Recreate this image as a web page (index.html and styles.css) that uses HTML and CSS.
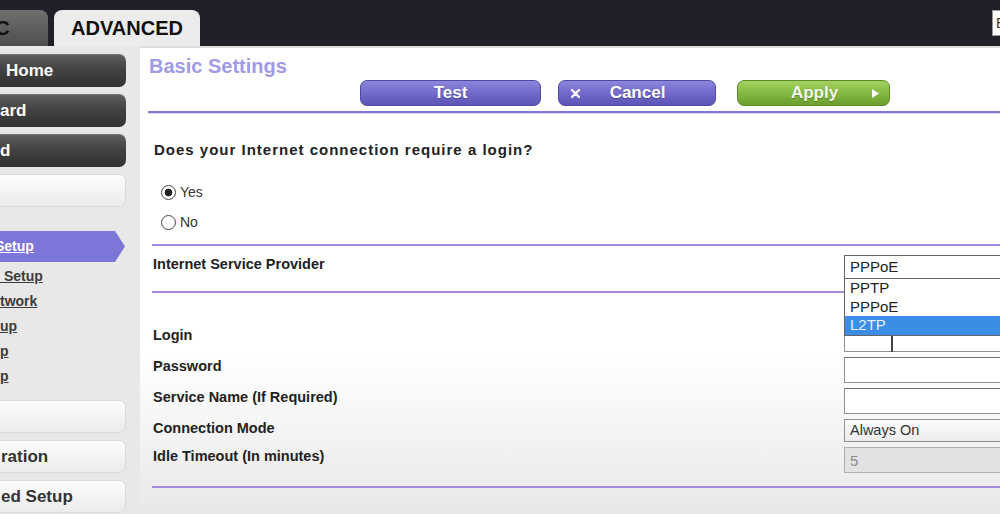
FILE: index.html
```html
<!DOCTYPE html>
<html lang="en">
<head>
    <meta charset="UTF-8">
    <meta name="viewport" content="width=device-width, initial-scale=1.0">
    <title>Basic Settings</title>
    <link rel="stylesheet" href="styles.css">
</head>
<body>
    <header class="topbar">
        <nav class="tabs">
            <a class="tab tab-basic">BASIC</a>
            <a class="tab tab-advanced">ADVANCED</a>
        </nav>
        <div class="lang">English</div>
    </header>

    <div class="page">
        <aside class="sidebar">
            <a class="menu-btn dark first">Home</a>
            <a class="menu-btn dark">ard</a>
            <a class="menu-btn dark">d</a>
            <a class="menu-btn light"></a>

            <a class="sub-active">Setup</a>
            <ul class="sub-menu">
                <li><a>&nbsp;Setup</a></li>
                <li><a>twork</a></li>
                <li><a>up</a></li>
                <li><a>p</a></li>
                <li><a>p</a></li>
            </ul>

            <a class="menu-btn light after-sub"></a>
            <a class="menu-btn light">ration</a>
            <a class="menu-btn light">ed Setup</a>
        </aside>

        <main class="content">
            <h2 class="title">Basic Settings</h2>

            <div class="actions">
                <button class="btn purple btn-test"><span class="btn-label">Test</span></button>
                <button class="btn purple btn-cancel">
                    <svg class="icon-x" width="9" height="9" viewBox="0 0 9 9"><path d="M1 1 L8 8 M8 1 L1 8" stroke="#fff" stroke-width="2.4" stroke-linecap="round"/></svg>
                    <span class="btn-label">Cancel</span>
                </button>
                <button class="btn green btn-apply">
                    <span class="btn-label">Apply</span>
                    <svg class="icon-play" width="7" height="9" viewBox="0 0 7 9"><polygon points="0,0 7,4.5 0,9" fill="#fff"/></svg>
                </button>
            </div>
            <div class="rule rule-top"></div>

            <form class="settings">
                <p class="question">Does your Internet connection require a login?</p>
                <label class="radio"><input type="radio" name="login" checked>Yes</label>
                <label class="radio"><input type="radio" name="login">No</label>
                <div class="rule"></div>

                <div class="row isp">
                    <span class="label">Internet Service Provider</span>
                    <div class="combo">
                        <div class="select">PPPoE</div>
                        <ul class="dropdown">
                            <li>PPTP</li>
                            <li>PPPoE</li>
                            <li class="selected">L2TP</li>
                        </ul>
                    </div>
                </div>
                <div class="rule"></div>

                <div class="fields">
                    <div class="row h31">
                        <span class="label">Login</span>
                        <div class="field">
                            <input type="text">
                            <span class="caret"></span>
                        </div>
                    </div>
                    <div class="row h31">
                        <span class="label">Password</span>
                        <div class="field"><input type="password"></div>
                    </div>
                    <div class="row h31">
                        <span class="label">Service Name (If Required)</span>
                        <div class="field"><input type="text"></div>
                    </div>
                    <div class="row h28">
                        <span class="label">Connection Mode</span>
                        <div class="field"><div class="select mode">Always On</div></div>
                    </div>
                    <div class="row h28">
                        <span class="label">Idle Timeout (In minutes)</span>
                        <div class="field"><input type="text" value="5" disabled></div>
                    </div>
                </div>
                <div class="rule rule-bottom"></div>
            </form>
        </main>
    </div>
</body>
</html>
```

FILE: styles.css
```css
body {
    margin: 0;
    height: 514px;
    overflow: hidden;
    font-family: "Liberation Sans", Arial, sans-serif;
    background-color: #e8e8e8;
    color: #222;
}
a {
    text-decoration: none;
}

/* top bar with tabs */
.topbar {
    height: 46px;
    background-color: #1f2028;
    display: flex;
    align-items: flex-end;
}
.tabs {
    display: flex;
    gap: 6px;
}
.tab {
    height: 36px;
    display: flex;
    align-items: center;
    justify-content: center;
    font-size: 20px;
    font-weight: bold;
    color: #111;
    border-radius: 8px 8px 0 0;
}
.tab-basic {
    width: 139px;
    margin-left: -91px;
    background: linear-gradient(#6f6f6f, #4e4e4e);
}
.tab-advanced {
    width: 146px;
    background-color: #ececec;
}
.lang {
    margin-left: auto;
    margin-right: -32px;
    align-self: center;
    width: 40px;
    height: 26px;
    box-sizing: border-box;
    padding-left: 3px;
    background: #fff;
    border: 1px solid #999;
    font-size: 14px;
    line-height: 24px;
    color: #333;
    overflow: hidden;
}

.page {
    display: flex;
    height: 468px;
}

/* left menu */
.sidebar {
    width: 140px;
    flex: none;
    padding-top: 8px;
    background-color: #e8e8e8;
    overflow: hidden;
}
.menu-btn {
    display: block;
    box-sizing: border-box;
    width: 146px;
    height: 33px;
    margin: 0 0 7px -20px;
    padding-left: 20px;
    border-radius: 7px;
    font-size: 17px;
    font-weight: bold;
    line-height: 33px;
    white-space: nowrap;
}
.menu-btn.first {
    padding-left: 26px;
}
.menu-btn.dark {
    color: #fff;
    background: linear-gradient(#606060, #444 45%, #303030);
    box-shadow: inset 0 1px 0 rgba(255, 255, 255, 0.15);
}
.menu-btn.light {
    color: #333;
    background: linear-gradient(#fdfdfd, #ebebeb);
    border: 1px solid #dadada;
    line-height: 31px;
}
.menu-btn.after-sub {
    margin-top: 11px;
}
.sub-active {
    display: block;
    width: 145px;
    height: 31px;
    margin: 24px 0 0 -20px;
    padding-left: 15px;
    box-sizing: border-box;
    background-color: #7d76d9;
    clip-path: polygon(0 0, 135px 0, 100% 50%, 135px 100%, 0 100%);
    color: #fff;
    font-size: 14px;
    font-weight: bold;
    line-height: 31px;
    text-decoration: underline;
}
.sub-menu {
    list-style: none;
    margin: 2px 0 0;
    padding: 0;
}
.sub-menu a {
    display: block;
    font-size: 14px;
    font-weight: bold;
    line-height: 25px;
    color: #3c3c3c;
    text-decoration: underline;
    white-space: nowrap;
}

/* main panel */
.content {
    flex: 1;
    min-width: 0;
    border-top: 2px solid #dcdcdc;
    padding: 6px 0 0 8px;
    background: linear-gradient(#fff 0%, #fff 66%, #e8e8e8 100%);
}
.title {
    margin: 0 0 0 1px;
    font-size: 20px;
    line-height: 24px;
    color: #a09be4;
}
.actions {
    display: flex;
    margin-top: 2px;
    padding-left: 212px;
}
.btn {
    display: flex;
    align-items: center;
    height: 26px;
    padding: 0;
    box-sizing: border-box;
    border-radius: 7px;
    font-family: "Liberation Sans", Arial, sans-serif;
    font-size: 17px;
    font-weight: bold;
    color: #fff;
    text-shadow: 0 1px 1px rgba(0, 0, 0, 0.25);
}
.btn.purple {
    background: linear-gradient(#8c86dc, #6c65c6 60%, #5d56b7);
    border: 1px solid #4f49a0;
}
.btn.green {
    background: linear-gradient(#a3d160, #7eb43e 60%, #6b9d2f);
    border: 1px solid #5e8b2a;
    color: #f2f7e8;
}
.btn-label {
    flex: 1;
    text-align: center;
}
.btn-test {
    width: 181px;
}
.btn-cancel {
    width: 158px;
    margin-left: 17px;
}
.btn-cancel .icon-x {
    margin-left: 12px;
}
.btn-cancel .btn-label {
    padding-right: 20px;
}
.btn-apply {
    width: 153px;
    margin-left: 21px;
}
.btn-apply .btn-label {
    padding-left: 19px;
}
.btn-apply .icon-play {
    margin-right: 10px;
}

.rule {
    height: 2px;
    background-color: #a58cdb;
}
.rule-top {
    margin-top: 5px;
    background-color: #7f79d5;
    box-shadow: 0 1px 0 #dcd9f4;
}

/* form */
.settings {
    padding-left: 4px;
}
.question {
    margin: 27px 0 0 2px;
    font-size: 15px;
    font-weight: bold;
    letter-spacing: 1px;
    line-height: 20px;
    color: #222;
}
.radio {
    display: flex;
    align-items: center;
    height: 30px;
    padding-left: 9px;
    font-size: 14px;
    color: #333;
}
.radio:first-of-type {
    margin-top: 17px;
}
.radio input {
    appearance: none;
    width: 15px;
    height: 15px;
    margin: 0 4px 0 0;
    border: 1.5px solid #444;
    border-radius: 50%;
    background: #fff;
}
.radio input:checked {
    background: radial-gradient(circle, #222 0 3.5px, #fff 4.2px);
}
.radio + .rule {
    margin-top: 7px;
}

.row {
    display: flex;
    align-items: flex-start;
}
.label {
    width: 692px;
    flex: none;
    padding-left: 1px;
    box-sizing: border-box;
    font-size: 14.5px;
    font-weight: bold;
    line-height: 18px;
    color: #222;
}
.isp {
    height: 45px;
    padding-top: 9px;
    box-sizing: border-box;
}
.combo {
    position: relative;
    flex: none;
    width: 200px;
    z-index: 2;
}
.select {
    height: 24px;
    box-sizing: border-box;
    padding-left: 5px;
    border: 1px solid #666;
    background: #fff;
    font-size: 15px;
    line-height: 22px;
    color: #222;
}
.dropdown {
    position: absolute;
    top: 24px;
    left: 0;
    right: 0;
    margin: 0;
    padding: 0;
    list-style: none;
    background: #fff;
    border: 1px solid #666;
    border-top: none;
}
.dropdown li {
    padding-left: 5px;
    font-size: 15px;
    line-height: 18.5px;
    color: #222;
}
.dropdown li.selected {
    background-color: #3b8de6;
    color: #e6f0ff;
}

.fields {
    margin-top: 33px;
}
.h31 {
    height: 31px;
}
.h28 {
    height: 28px;
}
.field {
    position: relative;
    flex: none;
    width: 200px;
}
.field input {
    display: block;
    width: 200px;
    height: 26px;
    margin: 0;
    padding: 0 5px;
    box-sizing: border-box;
    border: 1px solid #909090;
    border-top-color: #707070;
    background: #fff;
    font-family: "Liberation Sans", Arial, sans-serif;
    font-size: 15px;
}
.field input:disabled {
    background-color: #e2e2e2;
    border-color: #b0b0b0;
    color: #8a8a8a;
}
.caret {
    position: absolute;
    left: 47px;
    top: 10px;
    width: 2px;
    height: 16px;
    background-color: #444;
}
.select.mode {
    height: 23px;
    border-color: #909090;
    background: linear-gradient(#fbfbfb, #ececec);
    font-size: 14.5px;
    line-height: 21px;
    color: #333;
}
.rule-bottom {
    margin-top: 11px;
}
```
